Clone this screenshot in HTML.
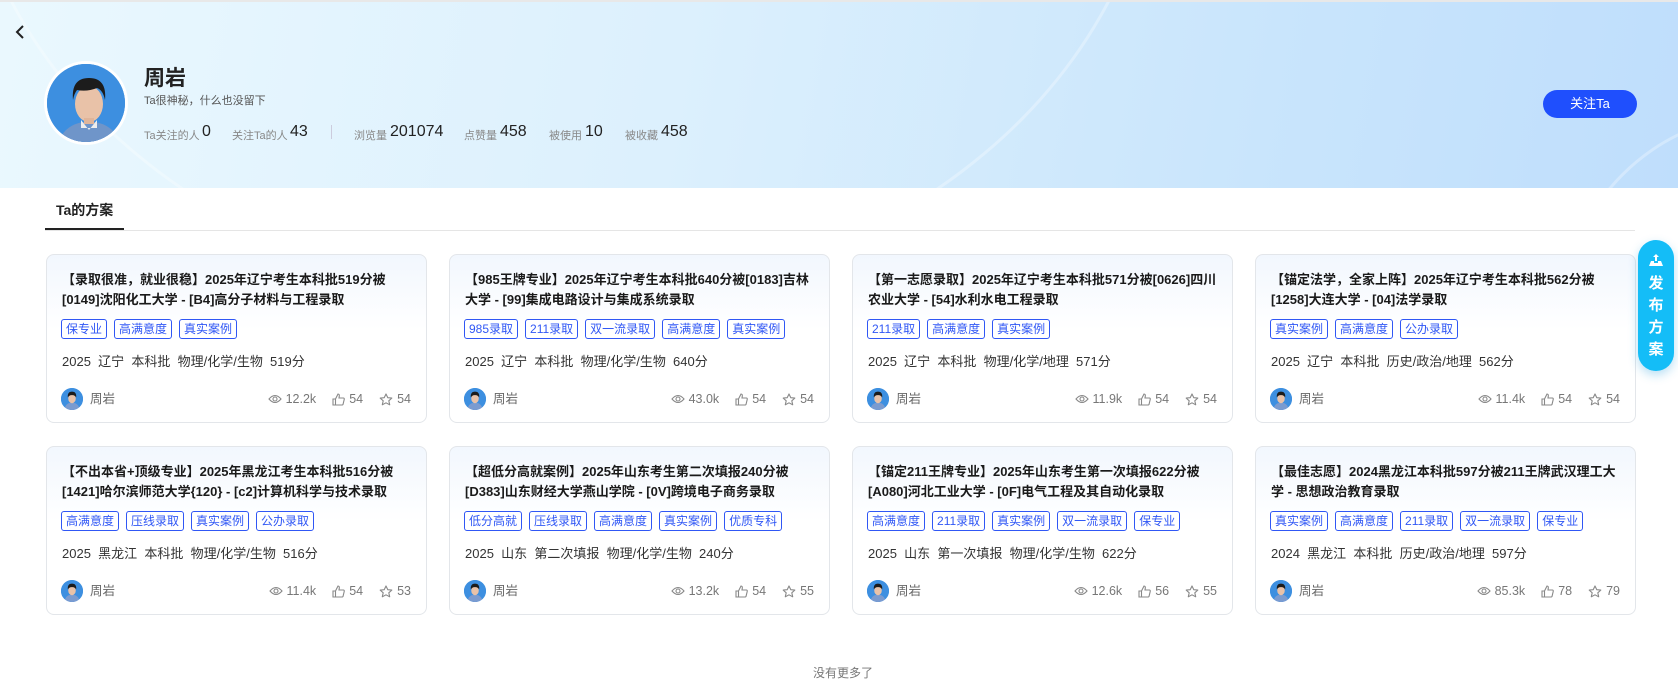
<!DOCTYPE html>
<html><head><meta charset="utf-8"><style>
*{margin:0;padding:0;box-sizing:border-box}
body{width:1678px;height:673px;overflow:hidden;background:#fff;font-family:"Liberation Sans","Noto Sans CJK SC",sans-serif;color:#222;position:relative}
.hdr{position:absolute;left:0;top:0;width:1678px;height:188px;background:linear-gradient(100deg,#eaf8fe 0%,#dcf0fd 40%,#c9e5fc 75%,#bfdefc 100%);overflow:hidden;border-top:2px solid #e8e8e8}
.arc{position:absolute;border-radius:50%;border:3px solid rgba(255,255,255,.3)}
.back{position:absolute;left:14px;top:22px}
.av{position:absolute;left:44px;top:59px;width:84px;height:84px;border-radius:50%;border:3px solid #fff;background:#3d8fe0;overflow:hidden}
.name{position:absolute;left:144px;top:60px;font-size:21px;font-weight:bold}
.sub{position:absolute;left:144px;top:90px;font-size:11px;color:#555}
.stats{position:absolute;left:144px;top:121px;height:20px;font-size:11px;color:#888;white-space:nowrap}
.stats span{position:absolute;top:4px}
.stats b{position:absolute;top:0;font-weight:normal;font-size:16px;color:#222}
.follow{position:absolute;left:1543px;top:88px;width:94px;height:28px;border-radius:14px;background:#1f4ffd;color:#fff;font-size:13px;text-align:center;line-height:28px}
.tab{position:absolute;left:56px;top:200px;font-size:14px;font-weight:bold}
.tabline{position:absolute;left:45px;top:228px;width:79px;height:2px;background:#222}
.div{position:absolute;left:45px;top:230px;width:1590px;height:1px;background:#e5e5e5}
.card{position:absolute;width:381px;height:169px;border:1px solid #e3e6ea;border-radius:8px;background:linear-gradient(180deg,#f2f7fe 0%,#fff 45%)}
.t{position:absolute;left:15px;top:15px;right:14px;font-size:13px;font-weight:bold;line-height:20px;color:#1a1a1a}
.tags{position:absolute;left:14px;top:64px;display:flex;gap:7px}
.tags span{border:1px solid #3057f5;color:#3057f5;font-size:12px;height:20px;line-height:18px;padding:0 4px;border-radius:3px;background:#fff}
.info{position:absolute;left:15px;top:96px;font-size:13px;color:#333;white-space:pre}
.ft{position:absolute;left:14px;right:15px;top:133px;height:22px}
.sa{position:absolute;left:0;top:0;width:22px;height:22px;border-radius:50%;background:#3d8fe0;overflow:hidden}
.fn{position:absolute;left:29px;top:3px;font-size:12.5px;color:#666;line-height:16px}
.fs{position:absolute;right:0;top:3px;font-size:12.5px;color:#777;display:flex;align-items:center;gap:4px;line-height:16px}
.fs svg{display:block}
.more{position:absolute;left:813px;top:664px;font-size:12px;color:#777}
.pub{position:absolute;left:1638px;top:240px;width:36px;height:131px;border-radius:18px;background:#14bdf7;box-shadow:0 4px 10px rgba(20,150,220,.3);color:#fff;font-weight:bold;font-size:15px;text-align:center}
</style></head><body>
<div class="hdr">
<div class="arc" style="left:-40px;top:-700px;width:1200px;height:1000px"></div>
<div class="arc" style="left:1560px;top:110px;width:420px;height:420px"></div>
<svg class="back" width="12" height="16" viewBox="0 0 12 16"><path d="M9 2 L3 8 L9 14" fill="none" stroke="#222" stroke-width="2"/></svg>
<div class="av"><svg width="84" height="84" viewBox="0 0 84 84"><rect width="84" height="84" fill="#3d8fe0"/><path d="M10 84 Q14 62 36 58 L48 58 Q70 62 74 84Z" fill="#6f95c9"/><path d="M34 56 L42 66 L50 56 L50 64 L34 64Z" fill="#eee"/><ellipse cx="42" cy="40" rx="14" ry="18" fill="#e9c2a8"/><path d="M26 36 Q24 14 42 14 Q60 14 58 36 Q56 26 50 24 Q40 28 30 26 Q27 30 26 36Z" fill="#1c1c1c"/><rect x="37" y="54" width="10" height="6" fill="#e0b59a"/></svg></div>
<div class="name">周岩</div>
<div class="sub">Ta很神秘，什么也没留下</div>
<div class="stats">
<span style="left:0">Ta关注的人</span><b style="left:58px">0</b>
<span style="left:88px">关注Ta的人</span><b style="left:146px">43</b>
<i style="position:absolute;left:187px;top:2px;width:1px;height:14px;background:#ccd"></i>
<span style="left:210px">浏览量</span><b style="left:246px">201074</b>
<span style="left:320px">点赞量</span><b style="left:356px">458</b>
<span style="left:405px">被使用</span><b style="left:441px">10</b>
<span style="left:481px">被收藏</span><b style="left:517px">458</b>
</div>
<div class="follow">关注Ta</div>
</div>
<div class="tab">Ta的方案</div>
<div class="div"></div><div class="tabline"></div>

<div id="cards"></div>
<div class="more">没有更多了</div>
<div class="pub"><svg style="display:block;margin:13px auto 6px" width="16" height="14" viewBox="0 0 16 14"><path d="M8 1 L5 4 H7 V8 H9 V4 H11Z" fill="#fff"/><path d="M1 13 L3 8 H6 V10 H10 V8 H13 L15 13Z" fill="#fff"/></svg><div style="line-height:22px">发<br>布<br>方<br>案</div></div>

<script>
var data=[
["【录取很准，就业很稳】2025年辽宁考生本科批519分被[0149]沈阳化工大学 - [B4]高分子材料与工程录取",["保专业","高满意度","真实案例"],"2025  辽宁  本科批  物理/化学/生物  519分","12.2k","54","54"],
["【985王牌专业】2025年辽宁考生本科批640分被[0183]吉林大学 - [99]集成电路设计与集成系统录取",["985录取","211录取","双一流录取","高满意度","真实案例"],"2025  辽宁  本科批  物理/化学/生物  640分","43.0k","54","54"],
["【第一志愿录取】2025年辽宁考生本科批571分被[0626]四川农业大学 - [54]水利水电工程录取",["211录取","高满意度","真实案例"],"2025  辽宁  本科批  物理/化学/地理  571分","11.9k","54","54"],
["【锚定法学，全家上阵】2025年辽宁考生本科批562分被[1258]大连大学 - [04]法学录取",["真实案例","高满意度","公办录取"],"2025  辽宁  本科批  历史/政治/地理  562分","11.4k","54","54"],
["【不出本省+顶级专业】2025年黑龙江考生本科批516分被[1421]哈尔滨师范大学{120} - [c2]计算机科学与技术录取",["高满意度","压线录取","真实案例","公办录取"],"2025  黑龙江  本科批  物理/化学/生物  516分","11.4k","54","53"],
["【超低分高就案例】2025年山东考生第二次填报240分被[D383]山东财经大学燕山学院 - [0V]跨境电子商务录取",["低分高就","压线录取","高满意度","真实案例","优质专科"],"2025  山东  第二次填报  物理/化学/生物  240分","13.2k","54","55"],
["【锚定211王牌专业】2025年山东考生第一次填报622分被[A080]河北工业大学 - [0F]电气工程及其自动化录取",["高满意度","211录取","真实案例","双一流录取","保专业"],"2025  山东  第一次填报  物理/化学/生物  622分","12.6k","56","55"],
["【最佳志愿】2024黑龙江本科批597分被211王牌武汉理工大学 - 思想政治教育录取",["真实案例","高满意度","211录取","双一流录取","保专业"],"2024  黑龙江  本科批  历史/政治/地理  597分","85.3k","78","79"]];
var sa='<svg width="22" height="22" viewBox="0 0 21 21"><rect width="21" height="21" fill="#3d8fe0"/><path d="M3 21 Q4 15 9 14 H12 Q17 15 18 21Z" fill="#7a9bd0"/><ellipse cx="10.5" cy="10" rx="3.6" ry="4.5" fill="#e9c2a8"/><path d="M6.5 9 Q6 3.5 10.5 3.5 Q15 3.5 14.5 9 Q13 6.5 10.5 6.8 Q8 6.5 6.5 9Z" fill="#1c1c1c"/></svg>';
var eye='<svg width="14" height="10" viewBox="0 0 14 10"><path d="M1 5 Q7 -2 13 5 Q7 12 1 5Z" fill="none" stroke="#888" stroke-width="1.1"/><circle cx="7" cy="5" r="2" fill="none" stroke="#888" stroke-width="1.1"/></svg>';
var like='<svg width="13" height="13" viewBox="0 0 13 13"><path d="M1 6 H3.5 V12 H1Z M3.5 6 L6 1 Q7.5 1 7.3 3 L7 5 H11.5 Q12.5 5.2 12.2 6.5 L11 11.5 Q10.7 12 10 12 H3.5" fill="none" stroke="#888" stroke-width="1.1"/></svg>';
var star='<svg width="14" height="13" viewBox="0 0 14 13"><path d="M7 1 L8.8 4.7 L12.8 5.1 L9.8 7.8 L10.7 11.8 L7 9.8 L3.3 11.8 L4.2 7.8 L1.2 5.1 L5.2 4.7Z" fill="none" stroke="#888" stroke-width="1.1" stroke-linejoin="round"/></svg>';
var h='';
data.forEach(function(d,i){var x=46+(i%4)*403,y=i<4?254:446;
h+='<div class="card" style="left:'+x+'px;top:'+y+'px"><div class="t">'+d[0]+'</div><div class="tags">'+d[1].map(function(t){return '<span>'+t+'</span>'}).join('')+'</div><div class="info">'+d[2]+'</div><div class="ft"><div class="sa">'+sa+'</div><div class="fn">周岩</div><div class="fs">'+eye+'<span>'+d[3]+'</span><span style="width:8px"></span>'+like+'<span>'+d[4]+'</span><span style="width:8px"></span>'+star+'<span>'+d[5]+'</span></div></div></div>';});
document.getElementById('cards').innerHTML=h;
</script>
</body></html>
